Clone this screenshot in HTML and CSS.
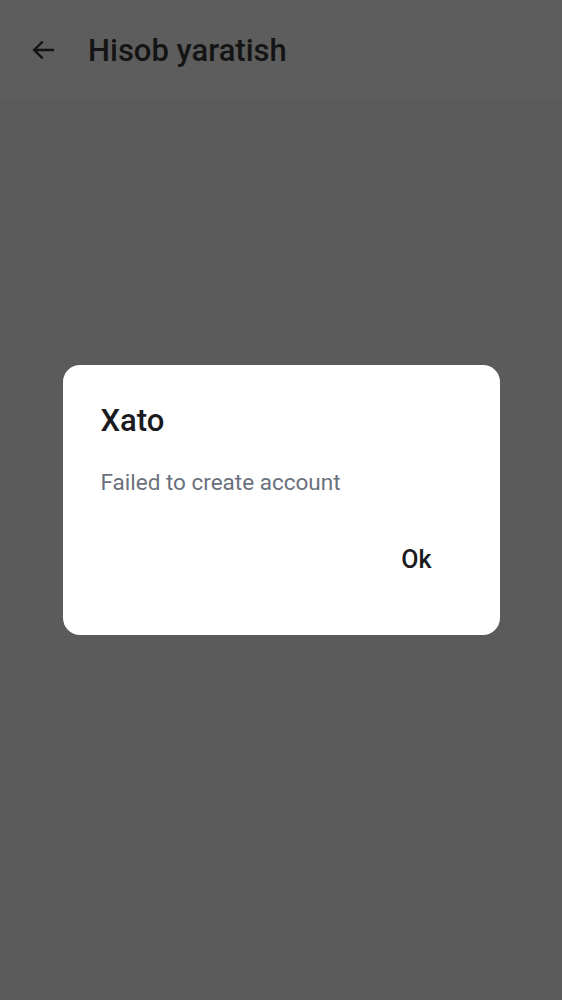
FILE: index.html
```html
<!DOCTYPE html>
<html>
<head>
<meta charset="utf-8">
<link rel="stylesheet" href="styles.css">
</head>
<body>
<div class="screen">
  <header class="appbar">
    <svg class="back" width="28" height="28" viewBox="0 0 24 24"><path d="M20.5 12H4.5M11 5.5L4.5 12l6.5 6.5" fill="none" stroke="#121212" stroke-width="2" stroke-linecap="square"/></svg>
    <h1 class="title">Hisob yaratish</h1>
  </header>
  <div class="scrim">
    <div class="dialog">
      <h2 class="dlg-title">Xato</h2>
      <p class="dlg-body">Failed to create account</p>
      <div class="actions"><button class="ok">Ok</button></div>
    </div>
  </div>
</div>
</body>
</html>
```
FILE: styles.css
```css
html, body { margin: 0; padding: 0; }
body { background: #5b5b5b; font-family: Roboto, "Noto Sans", sans-serif; }
.screen { position: relative; width: 562px; height: 1000px; background: #5b5b5b; }
.appbar { display: flex; align-items: center; height: 100px; padding-left: 29px; gap: 31px; background: #5d5d5d; }
.back { display: block; }
.title { margin: 0; font-size: 31px; font-weight: 500; color: #141414; }
.scrim { position: absolute; inset: 0; display: flex; align-items: center; justify-content: center; }
.dialog { width: 437px; height: 270px; box-sizing: border-box; background: #fff; border-radius: 17px; padding: 38px 38px 0 38px; margin-top: -1px; }
.dlg-title { margin: 0; font-size: 31px; font-weight: 500; color: #1b1b1f; line-height: 36px; }
.dlg-body { margin: 28px 0 0 0; font-size: 22.5px; color: #6b717c; line-height: 30px; }
.actions { display: flex; justify-content: flex-end; margin-top: 48px; padding-right: 30px; }
.ok { background: none; border: none; padding: 0; font-family: Roboto, sans-serif; font-size: 25px; font-weight: 500; color: #1b1b1f; line-height: 30px; }
```
